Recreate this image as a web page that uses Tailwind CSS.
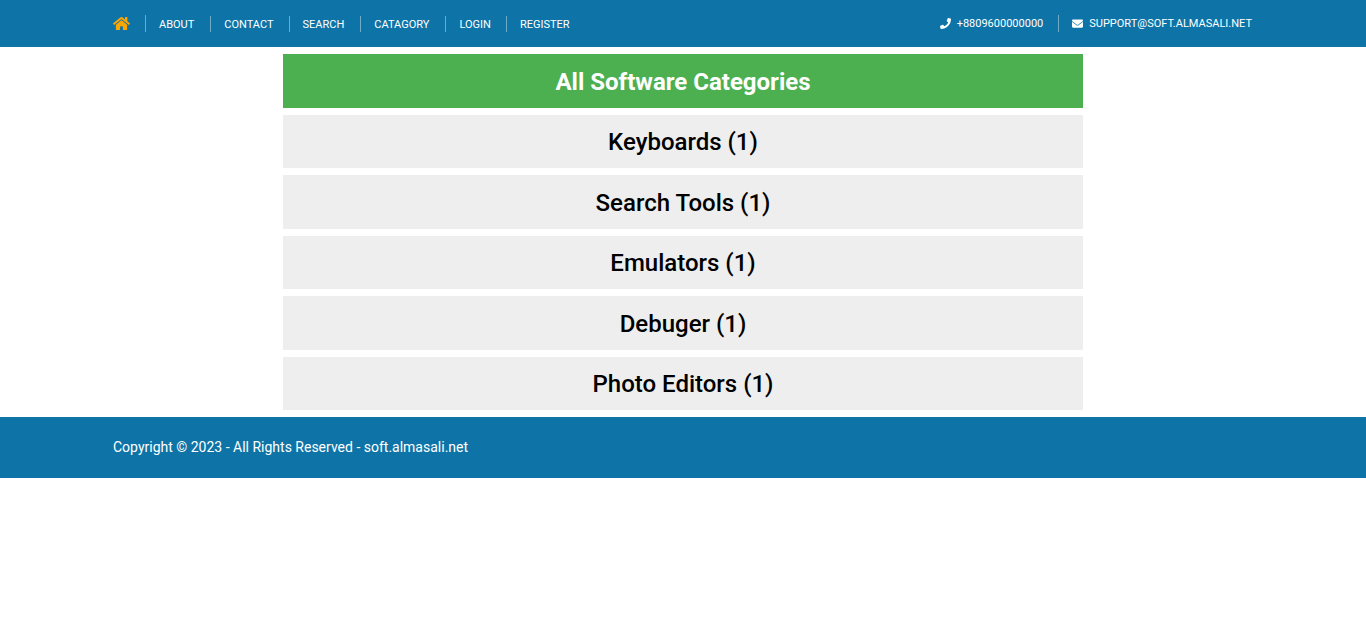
<!DOCTYPE html>
<html lang="en">
<head>
<meta charset="utf-8">
<meta name="viewport" content="width=device-width, initial-scale=1">
<title>All Software Categories</title>
<script src="https://cdn.jsdelivr.net/npm/@tailwindcss/browser@4"></script>
</head>
<body class="bg-white font-['Roboto',sans-serif] text-black">
<header class="bg-[#0e74a7] text-[11px] leading-4 text-white">
  <div class="mx-auto flex min-h-[47px] max-w-[1140px] flex-wrap items-center justify-between">
    <nav aria-label="Main">
      <ul class="flex flex-wrap items-end leading-[18px]">
        <li class="flex h-[17px] items-center border-r border-[#6eacca] pr-[15px]">
          <a href="#" aria-label="Home"><svg class="h-[15px] w-[17px] fill-[#ffa500]" viewBox="0 0 576 512" aria-hidden="true"><path d="M280.37 148.26L96 300.11V464a16 16 0 0 0 16 16l112.06-.29a16 16 0 0 0 15.92-16V368a16 16 0 0 1 16-16h64a16 16 0 0 1 16 16v95.64a16 16 0 0 0 16 16.05L464 480a16 16 0 0 0 16-16V300L295.67 148.26a12.19 12.19 0 0 0-15.3 0zM571.6 251.47L488 182.56V44.05a12 12 0 0 0-12-12h-56a12 12 0 0 0-12 12v72.61L318.47 43a48 48 0 0 0-61 0L4.34 251.47a12 12 0 0 0-1.6 16.9l25.5 31A12 12 0 0 0 45.15 301l235.22-193.74a12.19 12.19 0 0 1 15.3 0L530.9 301a12 12 0 0 0 16.9-1.6l25.5-31a12 12 0 0 0-1.7-16.93z"/></svg></a>
        </li>
        <li class="h-4 border-r border-[#6eacca] pr-4 pl-[13px]"><a href="#">ABOUT</a></li>
        <li class="h-4 border-r border-[#6eacca] pr-[15px] pl-[13px]"><a href="#">CONTACT</a></li>
        <li class="h-4 border-r border-[#6eacca] pr-4 pl-[13px]"><a href="#">SEARCH</a></li>
        <li class="h-4 border-r border-[#6eacca] pr-4 pl-[13px]"><a href="#">CATAGORY</a></li>
        <li class="h-4 border-r border-[#6eacca] pr-[15px] pl-[13px]"><a href="#">LOGIN</a></li>
        <li class="h-4 pl-[13px]"><a href="#">REGISTER</a></li>
      </ul>
    </nav>
    <ul class="flex flex-wrap items-center pr-px">
      <li class="border-r border-[#6eacca] pr-[15px]">
        <a href="tel:+8809600000000" class="flex h-[17px] items-center gap-1.5"><svg class="size-[11px] fill-current" viewBox="0 0 512 512" aria-hidden="true"><path d="M493.4 24.6l-104-24c-11.3-2.6-22.9 3.3-27.5 13.9l-48 112c-4.2 9.8-1.4 21.3 6.9 28l60.6 49.6c-36 76.7-98.9 140.5-177.2 177.2l-49.6-60.6c-6.8-8.3-18.2-11.1-28-6.9l-112 48C3.9 366.5-2 378.1.6 389.4l24 104C27.1 504.2 36.7 512 48 512c256.1 0 464-207.5 464-464 0-11.2-7.7-20.9-18.6-23.4z"/></svg>+8809600000000</a>
      </li>
      <li class="pl-[13px]">
        <a href="mailto:support@soft.almasali.net" class="flex h-[17px] items-center gap-1.5"><svg class="size-[11px] fill-current" viewBox="0 0 512 512" aria-hidden="true"><path d="M502.3 190.8c3.9-3.1 9.7-.2 9.7 4.7V400c0 26.5-21.5 48-48 48H48c-26.5 0-48-21.5-48-48V195.6c0-5 5.7-7.8 9.7-4.7 22.4 17.4 52.1 39.5 154.1 113.6 21.1 15.4 56.7 47.8 92.2 47.6 35.7.3 72-32.8 92.3-47.6 102-74.1 131.6-96.3 154-113.7zM256 320c23.2.4 56.6-29.2 73.4-41.4 132.7-96.3 142.8-104.7 173.4-128.7 5.8-4.5 9.2-11.5 9.2-18.9v-19c0-26.5-21.5-48-48-48H48c-26.5 0-48 21.5-48 48v19c0 7.4 3.4 14.3 9.2 18.9 30.6 23.9 40.7 32.4 173.4 128.7 16.8 12.2 50.2 41.8 73.4 41.4z"/></svg>SUPPORT@SOFT.ALMASALI.NET</a>
      </li>
    </ul>
  </div>
</header>
<main class="mx-auto grid min-h-[370px] max-w-[800px] auto-rows-fr gap-[7px] py-[7px] text-center text-2xl font-medium">
  <h1 class="flex items-center justify-center bg-[#4caf50] pt-0.5 font-bold text-white">All Software Categories</h1>
  <a href="#" class="flex items-center justify-center bg-[#eeeeee] pt-0.5">Keyboards (1)</a>
  <a href="#" class="flex items-center justify-center bg-[#eeeeee] pt-0.5">Search Tools (1)</a>
  <a href="#" class="flex items-center justify-center bg-[#eeeeee] pt-0.5">Emulators (1)</a>
  <a href="#" class="flex items-center justify-center bg-[#eeeeee] pt-0.5">Debuger (1)</a>
  <a href="#" class="flex items-center justify-center bg-[#eeeeee] pt-0.5">Photo Editors (1)</a>
</main>
<footer class="bg-[#0e74a7] py-5 text-sm leading-[21px] text-white">
  <p class="mx-auto max-w-[1140px]">Copyright © 2023 - All Rights Reserved - soft.almasali.net</p>
</footer>
</body>
</html>
